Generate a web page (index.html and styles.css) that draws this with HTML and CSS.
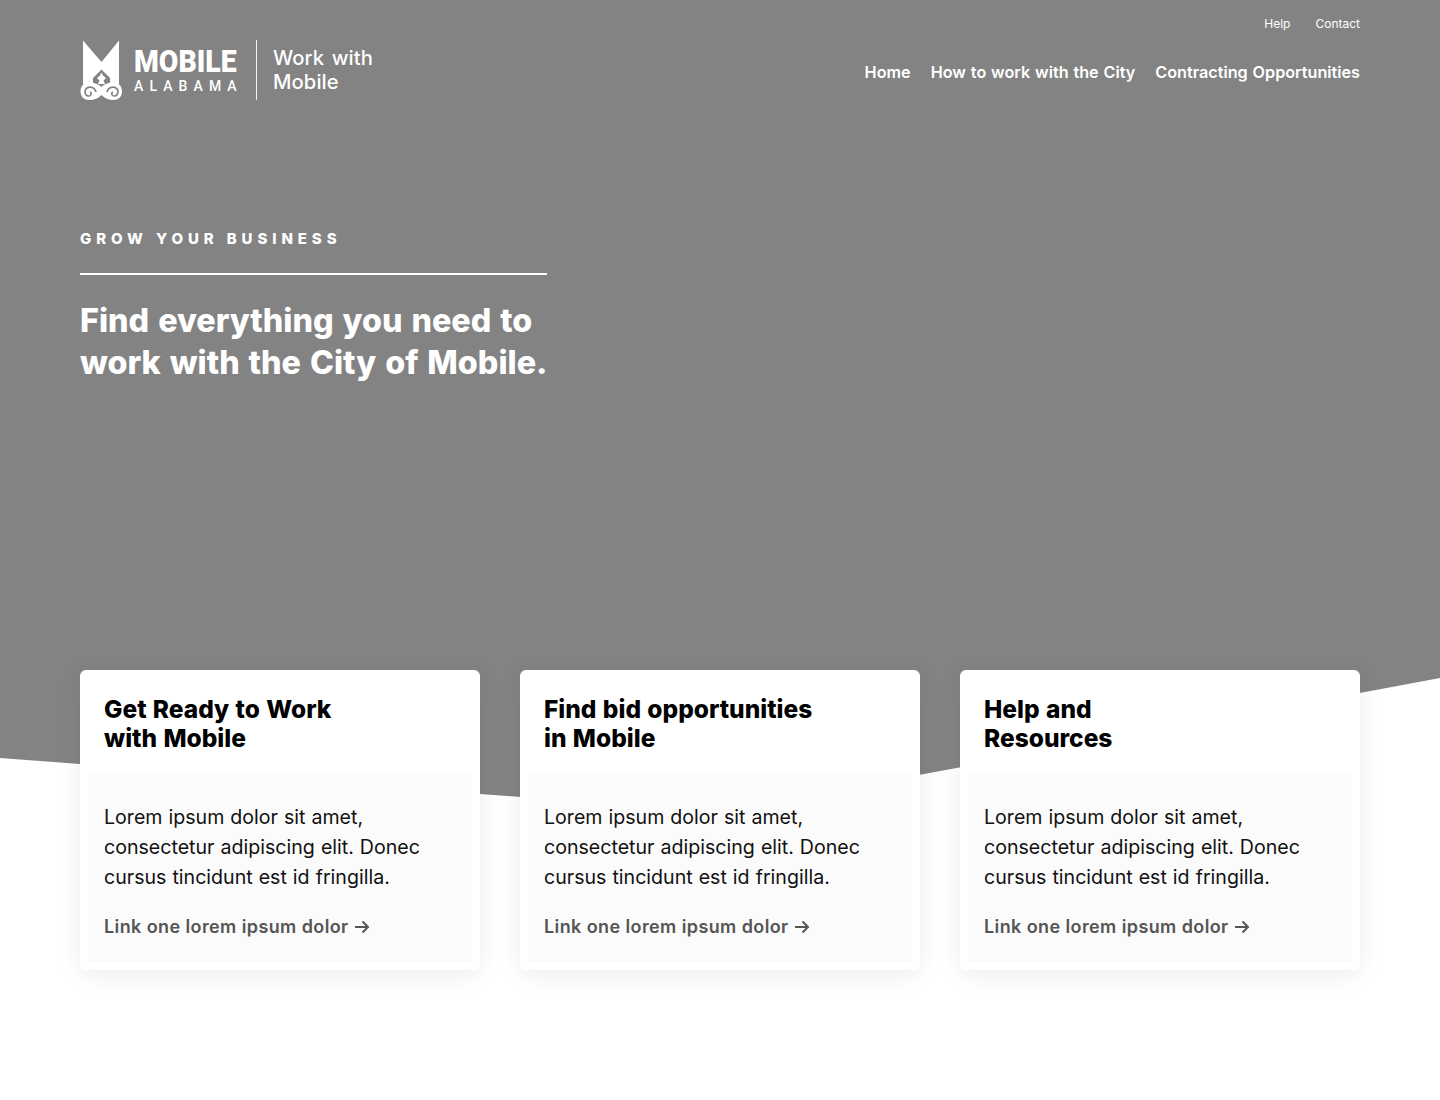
FILE: index.html
```html
<!DOCTYPE html>
<html lang="en">
<head>
<meta charset="utf-8">
<title>Work with Mobile</title>
<link rel="stylesheet" href="styles.css">
</head>
<body>
<section class="hero">
  <header class="header">
    <a class="brand" href="#">
      <svg class="brand-mark" viewBox="0 0 42 60" width="42" height="60" aria-hidden="true">
        <path class="mark-fill" d="M3 0.5 L21.5 22 L39 0.5 V44 H30 V38 L21.5 29.5 L13 38 V44 H3 Z"/>
        <path class="mark-fill" d="M21.5 32.500 L23 35.500 L26 38 L23.500 40.500 L25 44 H18 L19.500 40.500 L17 38 L20 35.500 Z"/>
        <path class="mark-fill" d="M21.5 47 C18 43.500 13 42 8 42.500 C3 43 0.500 47 0.500 51.500 C0.500 56.500 4 60 9.500 60 C14.500 60 18 58.500 21.500 55 C25 58.500 28.500 60 33 60 C38.500 60 42 56.500 42 51.500 C42 47 39.500 43 34.500 42.500 C29.500 42 25 43.500 21.500 47 Z"/>
        <path class="mark-cut" d="M16 52 C15 47.500 10 46 7 48 C4 50 4.500 55 8 56 C11 56.500 12.500 53.500 10 52"/>
        <path class="mark-cut" d="M27 52 C28 47.500 33 46 36 48 C39 50 38.500 55 35 56 C32 56.500 30.500 53.500 33 52"/>
      </svg>
      <span class="brand-city">
        <span class="brand-name">MOBILE</span>
        <span class="brand-state">ALABAMA</span>
      </span>
      <span class="brand-title">Work with<br>Mobile</span>
    </a>
    <div class="nav-stack">
      <nav class="util-nav">
        <a href="#">Help</a>
        <a href="#">Contact</a>
      </nav>
      <nav class="main-nav">
        <a href="#">Home</a>
        <a href="#">How to work with the City</a>
        <a href="#">Contracting Opportunities</a>
      </nav>
    </div>
  </header>
  <div class="intro">
    <p class="eyebrow">GROW YOUR BUSINESS</p>
    <h1 class="headline">Find everything you need to<br>work with the City of Mobile.</h1>
  </div>
</section>
<main class="cards">
  <article class="card">
    <h2 class="card-title">Get Ready to Work<br>with Mobile</h2>
    <div class="card-body">
      <p class="card-text">Lorem ipsum dolor sit amet,<br>consectetur adipiscing elit. Donec<br>cursus tincidunt est id fringilla.</p>
      <a class="card-link" href="#">Link one lorem ipsum dolor
        <svg class="arrow" viewBox="0 0 16 14" width="16" height="14" aria-hidden="true"><path d="M1 7 H14 M8.5 1.500 L14 7 L8.500 12.500"/></svg></a>
    </div>
  </article>
  <article class="card">
    <h2 class="card-title">Find bid opportunities<br>in Mobile</h2>
    <div class="card-body">
      <p class="card-text">Lorem ipsum dolor sit amet,<br>consectetur adipiscing elit. Donec<br>cursus tincidunt est id fringilla.</p>
      <a class="card-link" href="#">Link one lorem ipsum dolor
        <svg class="arrow" viewBox="0 0 16 14" width="16" height="14" aria-hidden="true"><path d="M1 7 H14 M8.5 1.500 L14 7 L8.500 12.500"/></svg></a>
    </div>
  </article>
  <article class="card">
    <h2 class="card-title">Help and<br>Resources</h2>
    <div class="card-body">
      <p class="card-text">Lorem ipsum dolor sit amet,<br>consectetur adipiscing elit. Donec<br>cursus tincidunt est id fringilla.</p>
      <a class="card-link" href="#">Link one lorem ipsum dolor
        <svg class="arrow" viewBox="0 0 16 14" width="16" height="14" aria-hidden="true"><path d="M1 7 H14 M8.5 1.500 L14 7 L8.500 12.500"/></svg></a>
    </div>
  </article>
</main>
</body>
</html>
```
FILE: styles.css
```css
* { box-sizing: border-box; }
html, body { margin: 0; padding: 0; }
body {
  background: #fff;
  color: #000;
  font-family: "Inter", "Open Sans", sans-serif;
  min-height: 1100px;
}
a { color: inherit; text-decoration: none; }

.hero {
  height: 812px;
  padding: 0 80px;
  background: #838383;
  color: #fff;
  clip-path: polygon(0 0, 100% 0, 100% 678px, 50% 812px, 0 758px);
}
.header {
  display: flex;
  justify-content: space-between;
  align-items: flex-start;
  padding-top: 16px;
}
.brand {
  display: flex;
  align-items: center;
  margin-top: 24px;
  height: 60px;
}
.brand-mark { display: block; flex: none; }
.mark-fill { fill: #fff; }
.mark-cut { fill: none; stroke: #838383; stroke-width: 1.6; }
.brand-city {
  display: flex;
  flex-direction: column;
  margin-left: 12px;
  padding-top: 1px;
  width: 110px;
  font-family: "Roboto", sans-serif;
}
.brand-name {
  font-size: 31px;
  line-height: 29px;
  font-weight: 900;
  transform: scaleX(.915);
  transform-origin: 0 50%;
  white-space: nowrap;
}
.brand-state {
  font-size: 14px;
  line-height: 16px;
  font-weight: 500;
  letter-spacing: 6.100px;
  margin-top: 2px;
}
.brand-title {
  display: block;
  margin-left: 12px;
  padding-left: 16px;
  height: 60px;
  padding-top: 6px;
  border-left: 1px solid rgba(255,255,255,.9);
  font-size: 20.200px;
  line-height: 24px;
  font-weight: 500;
  letter-spacing: .1px;
  word-spacing: 2px;
  white-space: nowrap;
}
.nav-stack { display: flex; flex-direction: column; align-items: flex-end; }
.util-nav {
  display: flex;
  gap: 25px;
  font-size: 12px;
  line-height: 16px;
}
.main-nav {
  display: flex;
  gap: 20px;
  margin-top: 30px;
  font-size: 16.200px;
  line-height: 20px;
  font-weight: 600;
  word-spacing: .8px;
}
.intro {
  width: fit-content;
  margin-top: 129px;
}
.eyebrow {
  margin: 0;
  padding-bottom: 24px;
  border-bottom: 2px solid #fff;
  font-size: 15px;
  line-height: 20px;
  font-weight: 800;
  letter-spacing: 4.900px;
}
.headline {
  margin: 25px 0 0;
  font-size: 32.300px;
  line-height: 42px;
  font-weight: 800;
  word-spacing: 1.900px;
  white-space: nowrap;
}
.cards {
  display: grid;
  grid-template-columns: repeat(3, 400px);
  gap: 40px;
  margin-top: -142px;
  padding: 0 80px;
  position: relative;
}
.card {
  height: 300px;
  padding: 0 8px 8px;
  background: #fff;
  border-radius: 6px;
  box-shadow: 0 6px 24px rgba(0,0,0,.07);
  display: flex;
  flex-direction: column;
}
.card-title {
  margin: 0;
  padding: 25px 16px 19px;
  font-size: 24.500px;
  line-height: 29px;
  font-weight: 800;
  word-spacing: 1px;
}
.card-body {
  flex: 1;
  padding: 30px 16px 0;
  background: #fbfbfb;
}
.card-text {
  margin: 0;
  font-size: 19.600px;
  line-height: 30px;
  word-spacing: .5px;
  color: #111;
}
.card-link {
  display: flex;
  align-items: center;
  gap: 5px;
  margin-top: 25px;
  font-size: 18px;
  line-height: 20px;
  font-weight: 600;
  letter-spacing: .4px;
  color: #555;
}
.arrow { fill: none; stroke: #555; stroke-width: 2; }
```
